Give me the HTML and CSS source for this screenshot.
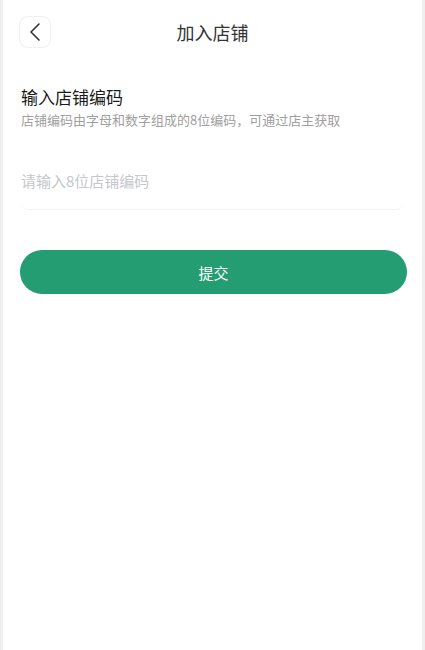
FILE: index.html
```html
<!DOCTYPE html>
<html lang="zh-CN">

<head>
    <meta charset="UTF-8">
    <meta name="viewport" content="width=device-width, initial-scale=1.0">
    <title>加入店铺</title>
    <link rel="stylesheet" href="styles.css">
</head>

<body>
    <div class="page">
        <div class="nav">
            <button class="back" aria-label="返回">
                <svg width="12" height="20" viewBox="0 0 12 20">
                    <path d="M10 2 L2 10 L10 18" fill="none" stroke="#333" stroke-width="1.6" stroke-linecap="round" stroke-linejoin="round" />
                </svg>
            </button>
            <h1 class="title">加入店铺</h1>
            <span class="nav-space"></span>
        </div>

        <div class="content">
            <h2 class="label">输入店铺编码</h2>
            <p class="hint">店铺编码由字母和数字组成的8位编码，可通过店主获取</p>

            <div class="field">
                <input type="text" id="shopCode" maxlength="8" placeholder="请输入8位店铺编码">
            </div>

            <button class="submit">提交</button>
        </div>
    </div>
</body>

</html>
```

FILE: styles.css
```css
body {
    margin: 0;
    background: #efefef;
    font-family: "Noto Sans CJK SC", "Noto Sans", sans-serif;
    color: #333;
}

.page {
    background: #fff;
    margin: 0 3px;
    min-height: 650px;
}

.nav {
    display: flex;
    align-items: center;
    justify-content: space-between;
    padding: 16px 16px 0;
    height: 32px;
}

.back {
    width: 32px;
    height: 32px;
    border: 1px solid #f0f0f0;
    border-radius: 9px;
    background: #fff;
    display: flex;
    align-items: center;
    justify-content: center;
    padding: 0;
}

.title {
    margin: 0;
    font-size: 18px;
    font-weight: normal;
    color: #333;
}

.nav-space {
    width: 32px;
}

.content {
    padding: 0 16px 0 17px;
}

.label {
    margin: 36px 0 0 1px;
    font-size: 17px;
    font-weight: normal;
    color: #1a1a1a;
    line-height: 26px;
}

.hint {
    margin: 1px 0 0 1px;
    font-size: 13px;
    color: #a0a0a0;
    line-height: 18px;
}

.field {
    margin: 37px 0 0 1px;
    width: 383px;
    border-bottom: 1px solid #f2f3f5;
    border-radius: 0 0 8px 8px;
}

.field input {
    display: block;
    width: 100%;
    border: none;
    outline: none;
    padding: 4px 0 18px;
    font-family: inherit;
    font-size: 15px;
    color: #333;
    background: transparent;
}

.field input::placeholder {
    color: #c4c7cc;
}

.submit {
    display: block;
    width: 387px;
    height: 44px;
    margin-top: 40px;
    border: none;
    border-radius: 22px;
    background: #259d72;
    color: #fff;
    font-family: inherit;
    font-size: 15px;
    cursor: pointer;
}
```
